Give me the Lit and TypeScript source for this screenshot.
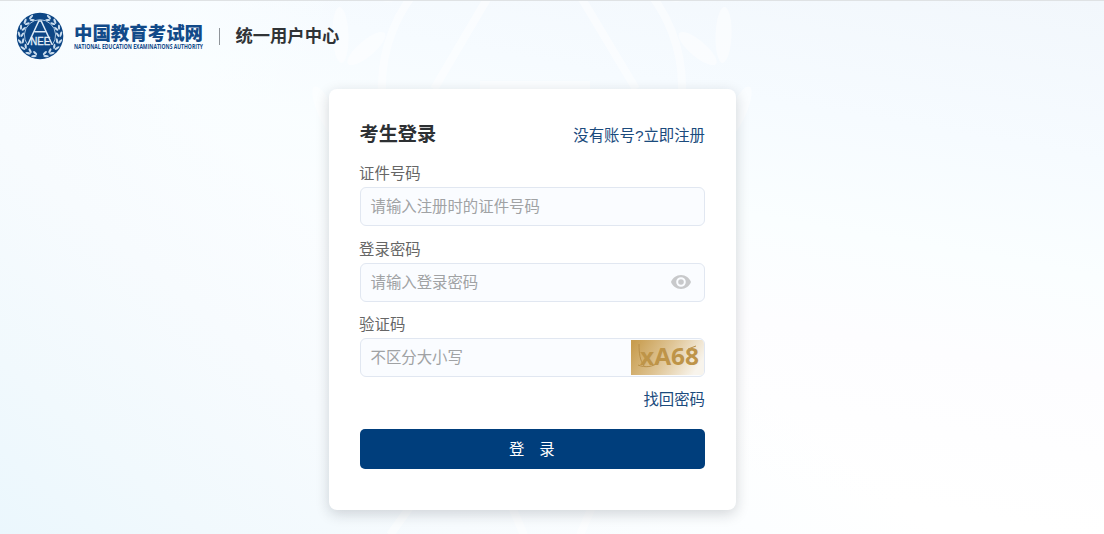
import { LitElement, html, css, svg } from "lit";
import { customElement } from "lit/decorators.js";

// One laurel branch: pairs of leaves placed along an arc on the left of the seal.
const leaves = [-62, -42, -22, -2, 18, 38, 58, 76];
const branch = (mirror: boolean) => svg`
  <g transform=${mirror ? "matrix(-1 0 0 1 48 0)" : ""}>
    ${leaves.map(
      (a) => svg`<g transform="rotate(${-a} 24 24)">
        <ellipse cx="3.1" cy="23" rx="1.1" ry="2.8" transform="rotate(-20 3.1 23)"></ellipse>
        <ellipse cx="6.3" cy="23.4" rx="1.1" ry="2.6" transform="rotate(30 6.3 23.4)"></ellipse>
      </g>`
    )}
  </g>`;

@customElement("nee-seal")
class NeeSeal extends LitElement {
  static styles = css`
    :host { display: block; width: 48px; height: 48px; }
    svg { display: block; width: 100%; height: 100%; }
    .disc { fill: #0d4685; }
    .leaves { fill: #c9dcee; }
    .line { fill: none; stroke: #dceaf6; stroke-width: 1.5; }
    .arc { fill: none; stroke: #a9c4de; stroke-width: 1; }
    .letters { fill: #e6f1fa; stroke: #e6f1fa; stroke-width: 0.3; font: 10.5px "Liberation Sans", Arial, sans-serif; }
  `;
  render() {
    return html`<svg viewBox="0 0 48 48">
      <circle class="disc" cx="24" cy="24" r="23.3"></circle>
      <g class="leaves">${branch(false)}${branch(true)}</g>
      <circle class="disc" cx="24" cy="23.5" r="16"></circle>
      <path class="arc" d="M11.8 33 A15.6 15.6 0 1 1 36.2 33"></path>
      <path class="line" d="M11.8 32.8 L22.8 9 H25.2 L36.2 32.8 M18.6 19.8 H29.4"></path>
      <text class="letters" x="14.2" y="32.8" textLength="20" lengthAdjust="spacingAndGlyphs">NEE</text>
    </svg>`;
  }
}

@customElement("page-watermark")
class PageWatermark extends LitElement {
  static styles = css`
    :host { display: block; width: 440px; height: 534px; opacity: 0.5; }
    svg { display: block; width: 100%; height: 100%; }
    .leaf { fill: #fff; }
    .stroke { fill: none; stroke: #fff; stroke-width: 8; }
  `;
  render() {
    const side = [-34, -12, 10, 32];
    const wing = (mirror: boolean) => svg`
      <g class="leaf" transform=${mirror ? "matrix(-1 0 0 1 440 0)" : ""}>
        ${side.map(
          (a) => svg`<g transform="rotate(${30 - a} 220 110)">
            <ellipse cx="14" cy="104" rx="8" ry="28" transform="rotate(-22 14 104)"></ellipse>
            <ellipse cx="43" cy="108" rx="8" ry="24" transform="rotate(30 43 108)"></ellipse>
          </g>`
        )}
      </g>`;
    return html`<svg viewBox="0 0 440 534">
      ${wing(false)}${wing(true)}
      <circle class="stroke" cx="220" cy="85" r="150"></circle>
      <path class="stroke" d="M175 -2 L122 88 M270 -2 L324 88 M168 84 H278"></path>
      <path class="stroke" d="M78 534 L98 506 M212 534 L200 506 M268 534 L280 506"></path>
    </svg>`;
  }
}

@customElement("app-root")
class AppRoot extends LitElement {
  static styles = css`
    * { box-sizing: border-box; }
    :host {
      display: block;
      position: relative;
      height: 534px;
      overflow: hidden;
      color: #333;
      font-family: "Liberation Sans", "Noto Sans CJK SC", sans-serif;
      font-size: 15.4px;
      border-top: 1px solid #dfe2e4;
      background:
        linear-gradient(40deg, #ebf7fd 0%, #f1f9fd 12%, #f7fbfe 27%, rgba(249, 253, 255, 0.7) 40%, rgba(255, 255, 255, 0) 54%),
        linear-gradient(100deg, #f6fbff 0%, rgba(250, 254, 255, 0.6) 16%, rgba(255, 255, 255, 0) 30%),
        linear-gradient(190deg, #f2f7fc 0%, #f6fbff 22%, #fafeff 38%, #fdfdff 52%, #fff 74%);
    }
    .watermark { position: absolute; left: 312px; top: 0; }
    .page { position: relative; display: flex; flex-direction: column; height: 100%; }
    .header { display: flex; align-items: center; height: 70px; padding-left: 16px; flex: none; }
    .brand { width: 134px; height: 48px; margin: 0 -2px 0 7.5px; display: block; overflow: visible; }
    .brand-cn { fill: #124a89; font: 900 18.4px "Noto Sans CJK SC", sans-serif; }
    .brand-en { fill: #124a89; font: bold 6.4px "Open Sans", sans-serif; }
    .rule { width: 1.5px; height: 17px; margin: 0 15.5px 0 15px; background: #8f9499; }
    .site { font-weight: bold; font-size: 17.3px; line-height: 24px; color: #303336; }
    .card {
      width: 407px;
      height: 421px;
      margin: 18px 0 0 329px;
      padding: 31px 31px 0 30.5px;
      border-radius: 8px;
      background: #fff;
      box-shadow: 0 4px 14px rgba(20, 30, 40, 0.18);
    }
    .top { display: flex; justify-content: space-between; align-items: center; height: 29.5px; }
    .title { margin: 0; font-size: 19.2px; line-height: 28px; color: #2d3033; }
    .link { color: #1b4b7d; line-height: 23px; }
    .top .link { padding-top: 2px; }
    .field { display: flex; flex-direction: column; height: 75.5px; }
    .fields { padding-top: 12.5px; }
    .label { line-height: 23px; color: #666; height: 25px; margin-left: -0.4px; }
    .box {
      display: flex;
      align-items: center;
      justify-content: space-between;
      height: 39px;
      padding: 0 0 0 10px;
      border: 1px solid #e1e7f1;
      border-radius: 6px;
      background: #fafcff;
      overflow: hidden;
    }
    .hint { color: #a0a2a4; line-height: 23px; }
    .eye { width: 22px; height: 16px; margin-right: 12px; }
    .captcha { width: 73px; height: 35px; display: block; }
    .captcha text { fill: #be9448; font: bold 23px "Open Sans", "DejaVu Sans", sans-serif; }
    .forgot { display: flex; justify-content: flex-end; height: 23px; margin-top: -1px; }
    .submit {
      display: block;
      width: 100%;
      height: 39.5px;
      margin-top: 18.5px;
      padding: 0 1px 2px 0;
      border: 0;
      border-radius: 5px;
      background: #003e7c;
      color: #fff;
      font: 400 15.4px "Noto Sans CJK SC", sans-serif;
      word-spacing: 11.5px;
    }
  `;

  render() {
    return html`
      <page-watermark class="watermark"></page-watermark>
      <div class="page">
        <header class="header">
          <nee-seal></nee-seal>
          <svg class="brand" viewBox="0 0 134 48">
            <text class="brand-cn" x="2" y="27.5" textLength="129" lengthAdjust="spacingAndGlyphs">中国教育考试网</text>
            <text class="brand-en" x="2" y="37.3" textLength="129" lengthAdjust="spacingAndGlyphs">NATIONAL EDUCATION EXAMINATIONS AUTHORITY</text>
          </svg>
          <span class="rule"></span>
          <span class="site">统一用户中心</span>
        </header>
        <main class="card">
          <div class="top">
            <h1 class="title">考生登录</h1>
            <a class="link">没有账号?立即注册</a>
          </div>
          <div class="fields">
            <div class="field">
              <span class="label">证件号码</span>
              <div class="box"><span class="hint">请输入注册时的证件号码</span></div>
            </div>
            <div class="field">
              <span class="label">登录密码</span>
              <div class="box">
                <span class="hint">请输入登录密码</span>
                <svg class="eye" viewBox="0 0 22 16">
                  <path fill="#c8c9cb" fill-rule="evenodd" d="M11 1C6.3 1 2.500 3.900 1 8c1.500 4.100 5.300 7 10 7s8.500-2.900 10-7C19.500 3.900 15.700 1 11 1Zm0 11.800a4.800 4.800 0 1 1 0-9.600 4.800 4.800 0 0 1 0 9.600Z"></path>
                  <circle cx="11" cy="8" r="2.8" fill="#c8c9cb"></circle>
                </svg>
              </div>
            </div>
            <div class="field">
              <span class="label">验证码</span>
              <div class="box">
                <span class="hint">不区分大小写</span>
                <svg class="captcha" viewBox="0 0 73 35">
                  <defs>
                    <linearGradient id="gold" x1="0" y1="0.2" x2="1" y2="0.5">
                      <stop offset="0" stop-color="#c89d4f"></stop>
                      <stop offset="0.5" stop-color="#dfc596"></stop>
                      <stop offset="1" stop-color="#f8f4ec"></stop>
                    </linearGradient>
                  </defs>
                  <rect width="73" height="35" fill="url(#gold)"></rect>
                  <path d="M8 4 C8 14 9 20 13 26 M7 25 C14 28 22 27 28 22 M57 9 L65 6" fill="none" stroke="#b98f48" stroke-width="1"></path>
                  <text x="9" y="25" textLength="59" lengthAdjust="spacingAndGlyphs">xA68</text>
                </svg>
              </div>
            </div>
          </div>
          <div class="forgot"><a class="link">找回密码</a></div>
          <button class="submit">登 录</button>
        </main>
      </div>
    `;
  }
}
